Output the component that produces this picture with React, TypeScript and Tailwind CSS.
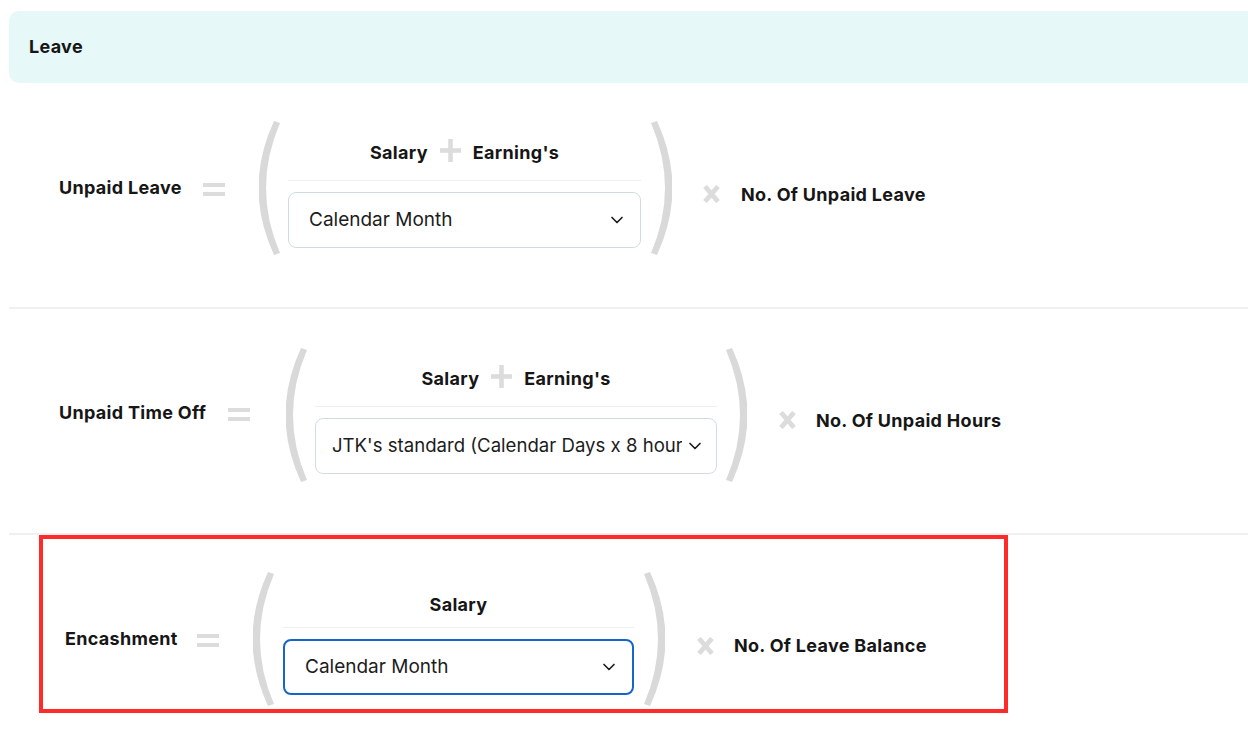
import React from "react";
import { ChevronDown } from "lucide-react";

const FONT = { fontFamily: "Inter, 'Noto Sans', sans-serif" };

function Paren({ right = false }: { right?: boolean }) {
  return (
    <svg
      width="22"
      height="134"
      viewBox="0 0 22 134"
      className="shrink-0"
      style={right ? { transform: "scaleX(-1)" } : undefined}
    >
      <path d="M15 0 L21 2 Q-7 67 21 132 L15 134 Q-16 67 15 0 Z" fill="#d9d9d9" />
    </svg>
  );
}

function Equals() {
  return (
    <div className="flex w-[22px] shrink-0 flex-col gap-[5px]">
      <div className="h-[4px] bg-[#dcdcdc]" />
      <div className="h-[4px] bg-[#dcdcdc]" />
    </div>
  );
}

function Times() {
  return (
    <svg width="17" height="18" viewBox="0 0 17 18" className="shrink-0">
      <path d="M2 1.5 L15 16.5 M15 1.5 L2 16.5" stroke="#dcdcdc" strokeWidth="4.8" />
    </svg>
  );
}

function Plus() {
  return (
    <svg width="21" height="23" viewBox="0 0 21 23" className="-mb-[2px] -mt-[8px] shrink-0">
      <rect x="8.2" y="0" width="4.6" height="23" fill="#dcdcdc" />
      <rect x="0" y="9.2" width="21" height="4.6" fill="#dcdcdc" />
    </svg>
  );
}

function Select({
  text,
  active = false,
  pl,
  pr,
  size,
  gap,
}: {
  text: string;
  active?: boolean;
  pl: string;
  pr: string;
  size: string;
  gap: string;
}) {
  return (
    <div
      className={
        "mt-[11px] flex h-[56px] items-center rounded-[8px] bg-white " +
        pl +
        " " +
        pr +
        " " +
        (active ? "border-2 border-[#1467c7]" : "border-[1.5px] border-[#cfdde3]")
      }
    >
      <span className={"flex-1 overflow-hidden whitespace-nowrap text-[#1c1c1c] " + size}>{text}</span>
      <ChevronDown size={20} strokeWidth={2} className={"shrink-0 text-[#1c1c1c] " + gap} />
    </div>
  );
}

const LBL = "text-[18px] font-bold leading-[24px] tracking-[0.3px] text-[#161616]";

function Header({ earnings, pb }: { earnings: boolean; pb: string }) {
  return (
    <div className={"flex items-center justify-center border-b border-[#eeeeee] " + pb}>
      <span className={LBL}>Salary</span>
      {earnings && (
        <>
          <div className="mx-[12px] flex items-center">
            <Plus />
          </div>
          <span className={LBL}>Earning's</span>
        </>
      )}
    </div>
  );
}

export default function App() {
  return (
    <div className="h-[729px] w-[1248px] overflow-hidden bg-white" style={FONT}>
      <div className="w-[1270px] pl-[9px] pt-[11px]">
        {/* Header */}
        <div className="flex h-[72px] items-center rounded-[10px] bg-[#e6f8f7] pl-[20px]">
          <span className={LBL}>Leave</span>
        </div>

        {/* Row 1 */}
        <div className="flex h-[226px] items-start border-b-2 border-[#f0f0f0] pl-[50px]">
          <div className={"mt-[93px] w-[144px] shrink-0 " + LBL}>Unpaid Leave</div>
          <div className="mt-[100px]">
            <Equals />
          </div>
          <div className="ml-[34px] mt-[38px]">
            <Paren />
          </div>
          <div className="ml-[7px] mt-[58px] w-[353px] shrink-0">
            <Header earnings pb="pb-[15px]" />
            <Select text="Calendar Month" pl="pl-[20px]" pr="pr-[13px]" size="text-[19px]" gap="ml-0" />
          </div>
          <div className="ml-[9px] mt-[38px]">
            <Paren right />
          </div>
          <div className="ml-[31px] mt-[102px]">
            <Times />
          </div>
          <div className={"ml-[21px] mt-[100px] whitespace-nowrap " + LBL}>No. Of Unpaid Leave</div>
        </div>

        {/* Row 2 */}
        <div className="flex h-[226px] items-start border-b-2 border-[#f0f0f0] pl-[50px]">
          <div className={"mt-[92px] w-[169px] shrink-0 " + LBL}>Unpaid Time Off</div>
          <div className="mt-[99px]">
            <Equals />
          </div>
          <div className="ml-[36px] mt-[39px]">
            <Paren />
          </div>
          <div className="ml-[7px] mt-[58px] w-[402px] shrink-0">
            <Header earnings pb="pb-[15px]" />
            <Select
              text="JTK's standard (Calendar Days x 8 hours)"
              pl="pl-[16px]"
              pr="pr-[11px]"
              size="text-[18.6px]"
              gap="ml-[3px]"
            />
          </div>
          <div className="ml-[8px] mt-[39px]">
            <Paren right />
          </div>
          <div className="ml-[32px] mt-[102px]">
            <Times />
          </div>
          <div className={"ml-[20px] mt-[100px] whitespace-nowrap " + LBL}>No. Of Unpaid Hours</div>
        </div>

        {/* Row 3 with annotation */}
        <div className="ml-[30px] flex h-[178px] w-[969px] items-start border-4 border-[#ff2b2b] pl-[22px]">
          <div className={"mt-[88px] w-[132px] shrink-0 " + LBL}>Encashment</div>
          <div className="mt-[95px]">
            <Equals />
          </div>
          <div className="ml-[34px] mt-[33px]">
            <Paren />
          </div>
          <div className="ml-[8px] mt-[54px] w-[351px] shrink-0">
            <Header earnings={false} pb="pb-[10px]" />
            <Select
              text="Calendar Month"
              active
              pl="pl-[20px]"
              pr="pr-[13px]"
              size="text-[19px]"
              gap="ml-0"
            />
          </div>
          <div className="ml-[9px] mt-[33px]">
            <Paren right />
          </div>
          <div className="ml-[32px] mt-[98px]">
            <Times />
          </div>
          <div className={"ml-[20px] mt-[95px] whitespace-nowrap " + LBL}>No. Of Leave Balance</div>
        </div>
      </div>
    </div>
  );
}
